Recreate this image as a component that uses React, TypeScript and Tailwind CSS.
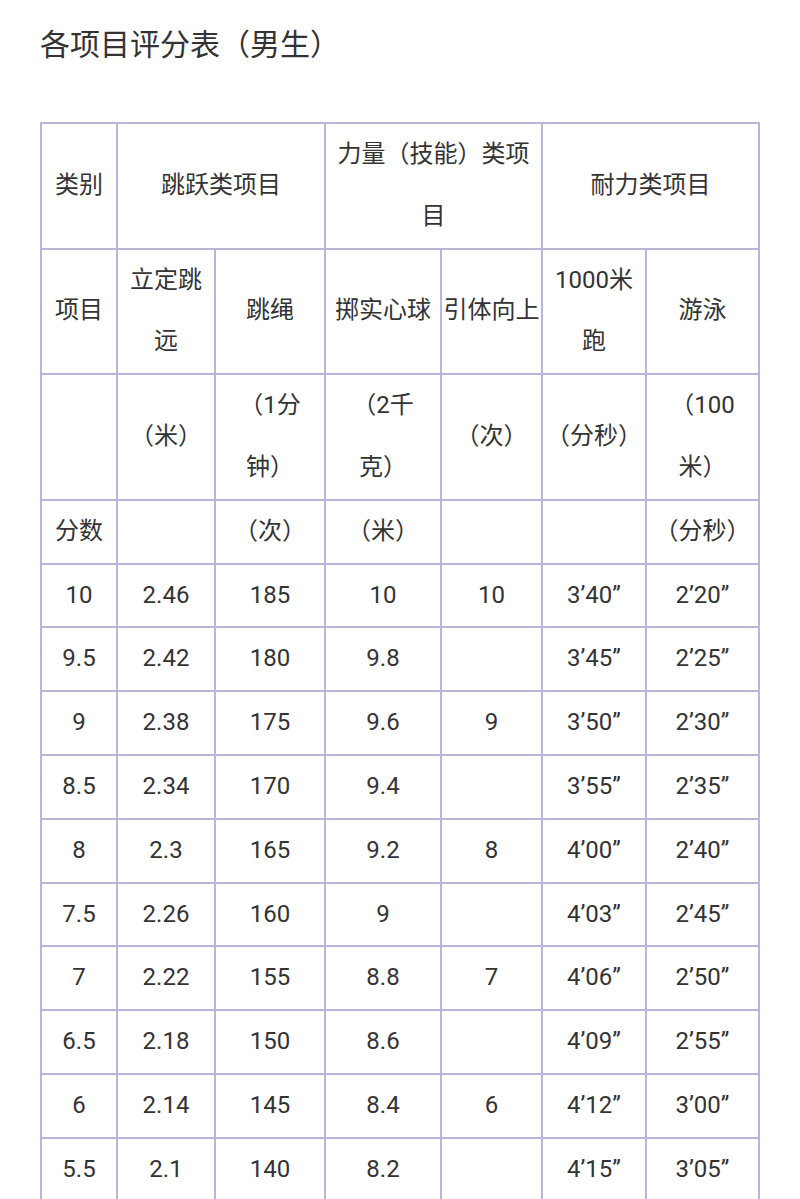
import React from "react";

const rows: string[][] = [
  ["10", "2.46", "185", "10", "10", "3’40”", "2’20”"],
  ["9.5", "2.42", "180", "9.8", "", "3’45”", "2’25”"],
  ["9", "2.38", "175", "9.6", "9", "3’50”", "2’30”"],
  ["8.5", "2.34", "170", "9.4", "", "3’55”", "2’35”"],
  ["8", "2.3", "165", "9.2", "8", "4’00”", "2’40”"],
  ["7.5", "2.26", "160", "9", "", "4’03”", "2’45”"],
  ["7", "2.22", "155", "8.8", "7", "4’06”", "2’50”"],
  ["6.5", "2.18", "150", "8.6", "", "4’09”", "2’55”"],
  ["6", "2.14", "145", "8.4", "6", "4’12”", "3’00”"],
  ["5.5", "2.1", "140", "8.2", "", "4’15”", "3’05”"],
];

const cell =
  "border-2 border-[#b9b5d9] px-0 py-0 text-center align-middle whitespace-nowrap leading-[61.8px] font-normal";

export default function App() {
  return (
    <div
      className="h-[1199px] overflow-hidden bg-white px-[40px] text-[#333333]"
      style={{ fontFamily: 'Roboto, "Noto Sans CJK SC", sans-serif' }}
    >
      <h1 className="pt-[25px] text-[30px] leading-[40px] font-normal">各项目评分表（男生）</h1>

      <table className="mt-[57px] w-[718px] table-fixed border-collapse text-[24px]">
        <colgroup>
          <col className="w-[76px]" />
          <col className="w-[98px]" />
          <col className="w-[110px]" />
          <col className="w-[116px]" />
          <col className="w-[101px]" />
          <col className="w-[104px]" />
          <col className="w-[113px]" />
        </colgroup>
        <thead>
          <tr>
            <th className={cell}>类别</th>
            <th className={cell} colSpan={2}>跳跃类项目</th>
            <th className={cell} colSpan={2}>
              力量（技能）类项
              <br />目
            </th>
            <th className={cell} colSpan={2}>耐力类项目</th>
          </tr>
          <tr>
            <th className={cell}>项目</th>
            <th className={cell}>
              立定跳
              <br />远
            </th>
            <th className={cell}>跳绳</th>
            <th className={cell}>掷实心球</th>
            <th className={cell}>引体向上</th>
            <th className={cell}>
              1000米
              <br />跑
            </th>
            <th className={cell}>游泳</th>
          </tr>
          <tr>
            <th className={cell}></th>
            <th className={cell}>（米）</th>
            <th className={cell}>
              （1分
              <br />钟）
            </th>
            <th className={cell}>
              （2千
              <br />克）
            </th>
            <th className={cell}>（次）</th>
            <th className={cell}>（分秒）</th>
            <th className={cell}>
              （100
              <br />米）
            </th>
          </tr>
          <tr>
            <th className={cell}>分数</th>
            <th className={cell}></th>
            <th className={cell}>（次）</th>
            <th className={cell}>（米）</th>
            <th className={cell}></th>
            <th className={cell}></th>
            <th className={cell}>（分秒）</th>
          </tr>
        </thead>
        <tbody>
          {rows.map((r) => (
            <tr key={r[0]}>
              {r.map((v, i) => (
                <td key={i} className={cell}>
                  {v}
                </td>
              ))}
            </tr>
          ))}
        </tbody>
      </table>
    </div>
  );
}
